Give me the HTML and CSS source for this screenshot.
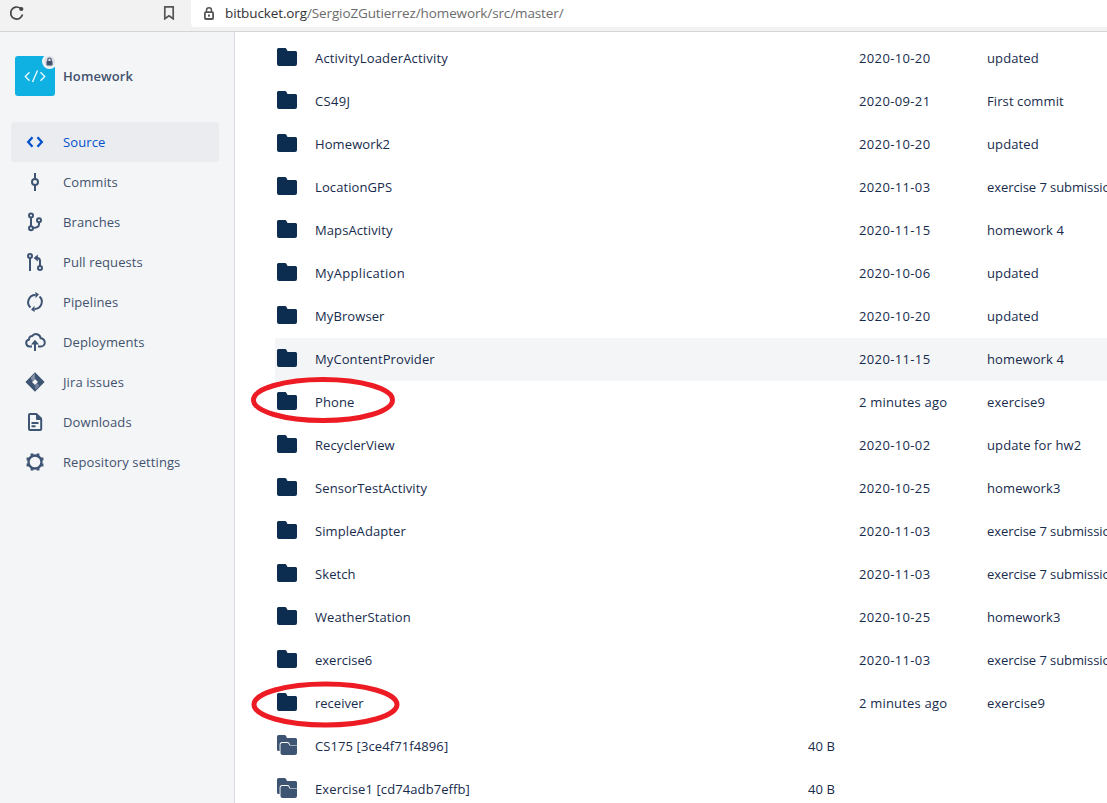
FILE: index.html
```html
<!DOCTYPE html>
<html lang="en">
<head>
<meta charset="utf-8">
<title>Homework</title>
<link rel="stylesheet" href="styles.css">
</head>
<body>
<svg class="defs" width="0" height="0" aria-hidden="true">
  <symbol id="folder" viewBox="0 0 20 18"><path d="M0 1.500Q0 0 1.500 0H8q1 0 1.500 1l1 2H18.500q1.500 0 1.500 1.500V16q0 2-2 2H2q-2 0-2-2z"/></symbol>
  <symbol id="submodule" viewBox="0 0 20 20"><path d="M0 1.500Q0 0 1.500 0H7.500q1 0 1.400.8L10 3h8.500q1.500 0 1.500 1.500V16H1.500Q0 16 0 14.500z"/><path d="M3.500 9.500Q3.500 8 5 8h5.300q1 0 1.400.8L12.700 11H20.500V18q0 2.500-2.500 2.500H5.500q-2 0-2-2z" fill="#fff" stroke="#fff" stroke-width="1.800"/><path d="M3.500 9.500Q3.500 8 5 8h5.300q1 0 1.400.8L12.500 10.500H20V18q0 2-2 2H5.500q-2 0-2-2z"/></symbol>
</svg>
<header class="browser">
  <div class="tools">
    <svg class="reload" width="16" height="16" viewBox="0 0 16 16"><path d="M11.500 3.400A6 6 0 1 0 13.500 9.500" fill="none" stroke="#444" stroke-width="1.700"/><circle cx="12.300" cy="4" r="2.100" fill="#444"/></svg>
    <svg class="mark" width="12" height="15" viewBox="0 0 12 15"><path d="M1.800 1.800h8.400v12L6 10.700 1.800 13.800z" fill="none" stroke="#555" stroke-width="1.700"/></svg>
  </div>
  <div class="address">
    <svg width="10" height="13" viewBox="0 0 10 13"><path d="M2.500 5V3.300a2.500 2.500 0 0 1 5 0V5" fill="none" stroke="#555" stroke-width="1.500"/><rect x=".9" y="5.200" width="8.200" height="6.800" rx="1" fill="none" stroke="#555" stroke-width="1.800"/><rect x="4" y="7.600" width="2" height="2" fill="#555"/></svg>
    <span class="url"><span class="host">bitbucket.org</span>/SergioZGutierrez/homework/src/master/</span>
  </div>
</header>
<div class="page">
  <nav class="sidebar">
    <div class="repo">
      <svg width="42" height="42" viewBox="0 0 42 42"><defs><mask id="notch"><rect width="42" height="42" fill="#fff"/><circle cx="34.500" cy="7.500" r="7.500" fill="#000"/></mask></defs><rect y="2" width="40" height="40" rx="3" fill="#0fb1e3" mask="url(#notch)"/><circle cx="34.500" cy="7.500" r="5.500" fill="#dfe1e6"/><path d="M32.800 7V5.700a1.700 1.700 0 0 1 3.400 0V7" fill="none" stroke="#42526e" stroke-width="1.200"/><rect x="31.500" y="7" width="6" height="4.500" rx=".8" fill="#42526e"/><path d="M14.500 18.200l-4.200 4.300 4.200 4.300M25.500 18.200l4.200 4.300-4.200 4.300M22.500 16.500l-5 11.500" fill="none" stroke="#e8f8fd" stroke-width="1.400"/></svg>
      <span class="repo-name">Homework</span>
    </div>
    <a class="item active"><svg viewBox="0 0 24 24"><path d="M9.500 7.300 5.200 12l4.300 4.700M14.500 7.300l4.300 4.700-4.300 4.700" class="line bold"/></svg><span>Source</span></a>
    <a class="item"><svg viewBox="0 0 24 24"><path d="M12 3v6M12 15v6" class="line"/><circle cx="12" cy="12" r="3" class="line"/></svg><span>Commits</span></a>
    <a class="item"><svg viewBox="0 0 24 24"><circle cx="8" cy="5.500" r="2" class="line"/><circle cx="8" cy="18.300" r="2" class="line"/><circle cx="16" cy="10.200" r="2" class="line"/><path d="M8 7.500v9M16 12.200v2q0 3.500-6 3.800" class="line"/></svg><span>Branches</span></a>
    <a class="item"><svg viewBox="0 0 24 24"><circle cx="7" cy="6" r="2" class="line"/><circle cx="17" cy="18" r="2" class="line"/><path d="M7 8v13M17 16v-5q0-3-3-3h-1.500" class="line"/><path d="M14.800 4.500 10.600 8l4.200 3.500z"/></svg><span>Pull requests</span></a>
    <a class="item"><svg viewBox="0 0 24 24"><path d="M7.500 17.500A7.200 7.200 0 0 1 12.500 5M16.500 6.500A7.200 7.200 0 0 1 11.500 19" class="line"/><path d="M12.300 2 16 4.200 12.600 8.200zM11.700 22 8 19.800l3.400-4z"/></svg><span>Pipelines</span></a>
    <a class="item"><svg viewBox="0 0 24 24"><path d="M9 16.500H6.500a3.600 3.600 0 0 1-.5-7.100 3 3 0 0 1 3-3.300 4.800 4.800 0 0 1 8.700 2.200 4 4 0 0 1 0 8.200H15" class="line"/><path d="M12 21v-9" class="line"/><path d="M8 14.400 12 9.800l4 4.600z"/></svg><span>Deployments</span></a>
    <a class="item"><svg viewBox="0 0 24 24"><path fill-rule="evenodd" d="M12 2.200 21.600 12 12 21.800 2.400 12zM12 9l-3 3 3 3 3-3z"/><path d="m11.700 3.300-3.500 4q-.6 3.600 2.200 3.200L12 9z" fill="#8592a6"/><path d="M12 15l1.600-1.500q2.800 0 2.200 3.200L12.300 20z" fill="#71819a"/></svg><span>Jira issues</span></a>
    <a class="item"><svg viewBox="0 0 24 24"><path d="M13.500 4H7q-1 0-1 1v14q0 1 1 1h10.200q1 0 1-1V9M8.500 13h7M8.500 16.200h4" class="line"/><path d="M13 3.200h1L19 8v2h-5q-1 0-1-1z"/></svg><span>Downloads</span></a>
    <a class="item"><svg viewBox="0 0 24 24"><circle cx="12" cy="12" r="6.500" class="line bold"/><path d="M9 6.400V3.600M15 6.400V3.600M9 17.600v2.800M15 17.600v2.800M6.400 9H3.600M6.400 15H3.600M17.600 9h2.800M17.600 15h2.800" class="tooth"/></svg><span>Repository settings</span></a>
  </nav>
  <main class="files">
    <div class="row"><svg class="folder"><use href="#folder"/></svg><span class="name wide">ActivityLoaderActivity</span><span class="size"></span><span class="date">2020-10-20</span><span class="msg">updated</span></div>
    <div class="row"><svg class="folder"><use href="#folder"/></svg><span class="name wider">CS49J</span><span class="size"></span><span class="date">2020-09-21</span><span class="msg">First commit</span></div>
    <div class="row"><svg class="folder"><use href="#folder"/></svg><span class="name">Homework2</span><span class="size"></span><span class="date">2020-10-20</span><span class="msg">updated</span></div>
    <div class="row"><svg class="folder"><use href="#folder"/></svg><span class="name">LocationGPS</span><span class="size"></span><span class="date">2020-11-03</span><span class="msg long">exercise 7 submission</span></div>
    <div class="row"><svg class="folder"><use href="#folder"/></svg><span class="name">MapsActivity</span><span class="size"></span><span class="date">2020-11-15</span><span class="msg">homework 4</span></div>
    <div class="row"><svg class="folder"><use href="#folder"/></svg><span class="name wider">MyApplication</span><span class="size"></span><span class="date">2020-10-06</span><span class="msg">updated</span></div>
    <div class="row"><svg class="folder"><use href="#folder"/></svg><span class="name">MyBrowser</span><span class="size"></span><span class="date">2020-10-20</span><span class="msg">updated</span></div>
    <div class="row hover"><svg class="folder"><use href="#folder"/></svg><span class="name">MyContentProvider</span><span class="size"></span><span class="date">2020-11-15</span><span class="msg">homework 4</span></div>
    <div class="row"><svg class="folder"><use href="#folder"/></svg><span class="name">Phone</span><span class="size"></span><span class="date ago">2 minutes ago</span><span class="msg">exercise9</span><svg class="ring upper" width="146" height="48"><ellipse cx="73" cy="24" rx="69.500" ry="20.500"/></svg></div>
    <div class="row"><svg class="folder"><use href="#folder"/></svg><span class="name">RecyclerView</span><span class="size"></span><span class="date">2020-10-02</span><span class="msg">update for hw2</span></div>
    <div class="row"><svg class="folder"><use href="#folder"/></svg><span class="name">SensorTestActivity</span><span class="size"></span><span class="date">2020-10-25</span><span class="msg">homework3</span></div>
    <div class="row"><svg class="folder"><use href="#folder"/></svg><span class="name">SimpleAdapter</span><span class="size"></span><span class="date">2020-11-03</span><span class="msg long">exercise 7 submission</span></div>
    <div class="row"><svg class="folder"><use href="#folder"/></svg><span class="name">Sketch</span><span class="size"></span><span class="date">2020-11-03</span><span class="msg long">exercise 7 submission</span></div>
    <div class="row"><svg class="folder"><use href="#folder"/></svg><span class="name">WeatherStation</span><span class="size"></span><span class="date">2020-10-25</span><span class="msg">homework3</span></div>
    <div class="row"><svg class="folder"><use href="#folder"/></svg><span class="name flat">exercise6</span><span class="size"></span><span class="date">2020-11-03</span><span class="msg long">exercise 7 submission</span></div>
    <div class="row"><svg class="folder"><use href="#folder"/></svg><span class="name flat">receiver</span><span class="size"></span><span class="date ago">2 minutes ago</span><span class="msg">exercise9</span><svg class="ring" width="150" height="48"><ellipse cx="74.500" cy="23.500" rx="71.500" ry="20.500"/></svg></div>
    <div class="row"><svg class="folder sub"><use href="#submodule"/></svg><span class="name">CS175 [3ce4f71f4896]</span><span class="size">40 B</span></div>
    <div class="row"><svg class="folder sub"><use href="#submodule"/></svg><span class="name">Exercise1 [cd74adb7effb]</span><span class="size">40 B</span></div>
  </main>
</div>
</body>
</html>
```

FILE: styles.css
```css
* { box-sizing: border-box; }
html, body { margin: 0; height: 803px; overflow: hidden; }
body { display: flex; flex-direction: column; background: #fff; color: #172b4d; font: 13px/20px "Open Sans", "Noto Sans", sans-serif; white-space: nowrap; }
.defs { position: absolute; }
.browser { display: flex; flex: none; height: 32px; background: #f2f2f2; border-bottom: 1px solid #d4d5d6; }
.tools { display: flex; flex: none; width: 191px; justify-content: space-between; align-items: flex-start; padding: 5px 16px 0 9px; }
.address { display: flex; flex: 1; height: 27px; background: #fff; border-bottom-left-radius: 4px; padding: 0 0 0 13px; gap: 11px; align-items: center; }
.url { color: #6c6c6c; font-size: 13.500px; letter-spacing: -.12px; padding-bottom: 1px; }
.host { color: #333; }
.page { display: flex; flex: 1; min-height: 0; }
.sidebar { flex: none; width: 235px; padding: 22px 15px 0 11px; background: #f4f5f7; border-right: 1px solid #d9dbdf; color: #42526e; letter-spacing: .1px; }
.repo { display: flex; align-items: center; gap: 6px; height: 42px; margin: 0 0 26px 4px; }
.repo-name { font-weight: 600; padding-top: 2px; }
.item { display: flex; align-items: center; height: 40px; padding-left: 12px; gap: 16px; border-radius: 3px; }
.item.active { background: #ebecf0; color: #0052cc; }
.item svg { width: 24px; height: 24px; fill: #3e5473; stroke: #3e5473; stroke-width: 0; }
.item.active svg { stroke: #0052cc; }
.item .line { fill: none; stroke-width: 2; }
.item .bold { stroke-width: 2.300; }
.item .tooth { fill: none; stroke-width: 2.800; }
.files { flex: 1; min-width: 0; padding: 5px 0 0 40px; overflow: hidden; }
.row { position: relative; display: flex; align-items: center; height: 43px; padding-left: 2px; }
.row.hover { background: #f4f5f7; }
.folder { flex: none; width: 20px; height: 18px; margin: 0 18px 3px 0; fill: #0c2c50; }
.folder.sub { height: 20px; fill: #3e5473; margin-bottom: 3px; }
.name, .size, .date, .msg { flex: none; padding-bottom: 2px; letter-spacing: .1px; }
.name { width: 493px; }
.name.wide { letter-spacing: .18px; }
.name.wider { letter-spacing: .3px; }
.name.flat { letter-spacing: 0; }
.size { width: 51px; }
.date { width: 128px; letter-spacing: .36px; }
.date.ago { letter-spacing: .2px; }
.msg.long { letter-spacing: -.08px; }
.ring { position: absolute; left: -24px; top: -1px; fill: none; stroke: #ed1c24; stroke-width: 5px; }
.ring.upper { left: -25px; top: -5px; }
```
